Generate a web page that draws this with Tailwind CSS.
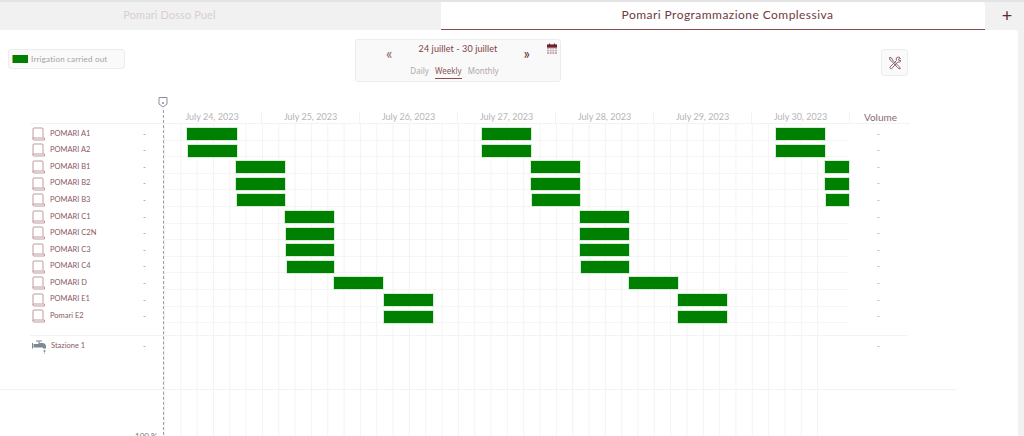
<!DOCTYPE html>
<html lang="en">
<head>
<meta charset="utf-8">
<title>Pomari Programmazione Complessiva</title>
<script src="https://cdn.jsdelivr.net/npm/@tailwindcss/browser@4"></script>
</head>
<body class="h-[436px] overflow-hidden bg-[#f1f1f1] font-['Lato',sans-serif] text-[#7b3f45]">

<!-- Tabs -->
<div class="flex h-[30px] border-t-2 border-[#e4e4e4]">
  <div class="w-[441px] flex items-center justify-center pr-[102px] text-[11px] tracking-[0.1px] text-[#d9cfcf] pb-[1px]">Pomari Dosso Puel</div>
  <div class="w-[544px] flex items-center justify-center pl-[29px] bg-white border-b border-[#8a4a50] rounded-tr-[3px] text-[12px] tracking-[0.45px] text-[#6e3a40] pb-[1px]">Pomari Programmazione Complessiva</div>
  <div class="flex-1 flex items-center justify-center pl-[5px] text-[#5a2a30] text-[18px] leading-none pb-[3px]">+</div>
</div>

<!-- Card -->
<div class="w-[1018px] h-[406px] bg-white rounded-tr-[3px] overflow-hidden relative">

  <!-- Toolbar -->
  <div class="h-[64px] relative">
    <div class="absolute left-[8px] top-[19px] w-[117px] h-[20px] flex items-center gap-[3px] pl-[3px] bg-[#fafafa] border border-[#ececec] rounded-[3px] text-[8px] tracking-[0.2px] text-[#a9a0a0]">
      <span class="w-[16px] h-[8px] bg-[#008000] border-l border-[#c9a13c]"></span>
      <span>Irrigation carried out</span>
    </div>

    <div class="absolute left-[355px] top-[9px] w-[206px] h-[43px] bg-[#f9f9f9] border border-[#ececec] rounded-[3px]">
      <div class="flex justify-between items-center pl-[30px] pr-[30px]">
        <span class="text-[15px] leading-none mt-[6px] text-[#8a5a5e]">«</span>
        <span class="text-[9px] leading-none mb-[5px] text-[#7b3f45] tracking-[0.1px]">24 juillet - 30 juillet</span>
        <span class="text-[15px] leading-none mt-[6px] text-[#5a2a30]">»</span>
      </div>
      <div class="flex justify-center gap-[6px] mt-[4px] pr-[7px] font-['Noto_Sans',sans-serif] text-[8px] text-[#b0aaaa]">
        <span class="h-[14px]">Daily</span>
        <span class="h-[14px] text-[#8a5a5e] border-b border-[#8a4a50]">Weekly</span>
        <span class="h-[14px]">Monthly</span>
      </div>
      <svg class="absolute left-[190px] top-[3px]" width="12" height="12" viewBox="0 0 12 12">
        <rect x="1" y="1.500" width="10" height="9.500" fill="#c4a9ad"/>
        <rect x="1" y="1.500" width="10" height="3" fill="#6e1f2b"/>
        <rect x="3" y="0.500" width="1" height="2.500" fill="#6e1f2b"/>
        <rect x="8" y="0.500" width="1" height="2.500" fill="#6e1f2b"/>
        <path d="M1 6.500H11M1 8.700H11M3.500 5V11M6 5V11M8.500 5V11" stroke="#fff" stroke-width="0.6"/>
      </svg>
    </div>

    <div class="absolute left-[881px] top-[19px] w-[27px] h-[27px] flex items-center justify-center bg-[#fafafa] border border-[#ececec] rounded-[3px]">
      <svg width="14" height="14" viewBox="0 0 14 14" fill="none" stroke="#8f6468" stroke-width="1">
        <path d="M1.500 1.500L3.500 1.800L4.500 4L11 10.500L12.500 12.500L11 12.800L9.500 11.500L3.500 5L1.800 3.800Z"/>
        <path d="M12.500 2.500A2.600 2.600 0 0 0 8.800 1.500A2.800 2.800 0 0 0 8.500 4.500L2 11A1.300 1.300 0 0 0 3.500 12.800L9.800 6A2.800 2.800 0 0 0 13 4.800L11 4.500L10.500 3Z"/>
      </svg>
    </div>
  </div>

  <!-- Chart -->
  <div class="relative">
    <!-- vertical grid -->
    <div class="absolute left-[164px] top-[29px] w-[669px] h-[320px] bg-[linear-gradient(to_right,#f3f3f3_1px,transparent_1px)] bg-[length:16.33px_100%]"></div>
    <!-- today marker -->
    <div class="absolute left-[163px] top-[16px] h-[330px] border-l border-dashed border-[#9aa0a8]"></div>
    <svg class="absolute left-[158px] top-[2px]" width="10" height="12" viewBox="0 0 10 12" fill="#fff" stroke="#8a8f9c">
      <path d="M1 1.500H9V8L5 11L1 8Z"/>
      <circle cx="5" cy="7" r="0.6" fill="#8a8f9c"/>
    </svg>

    <!-- header dates -->
    <div class="relative flex h-[29px] pl-[163px] text-[9px] leading-[10px] text-[#b5b5b5]">
      <div class="w-[98px] mt-[18px] h-[11px] text-center">July 24, 2023</div>
      <div class="w-[98px] mt-[18px] h-[11px] text-center border-l border-[#f3f3f3]">July 25, 2023</div>
      <div class="w-[98px] mt-[18px] h-[11px] text-center border-l border-[#f3f3f3]">July 26, 2023</div>
      <div class="w-[98px] mt-[18px] h-[11px] text-center border-l border-[#f3f3f3]">July 27, 2023</div>
      <div class="w-[98px] mt-[18px] h-[11px] text-center border-l border-[#f3f3f3]">July 28, 2023</div>
      <div class="w-[98px] mt-[18px] h-[11px] text-center border-l border-[#f3f3f3]">July 29, 2023</div>
      <div class="w-[98px] mt-[18px] h-[11px] text-center border-l border-[#f3f3f3]">July 30, 2023</div>
      <div class="w-[62px] mt-[18px] h-[11px] text-center border-l border-[#f3f3f3] text-[10px] text-[#8a6a70]">Volume</div>
    </div>

    <!-- rows -->
    <div id="rows" class="relative ml-[30px] w-[880px] border-t border-[#f3f3f3]"></div>

    <!-- station -->
    <div class="relative ml-[30px] w-[878px] h-[54px] mt-[12px] border-t border-[#f3f3f3] flex text-[7.5px]">
      <div class="w-[113px] flex pl-[2px] pt-[3px] gap-[4px]">
        <svg width="15" height="15" viewBox="0 0 15 15" fill="#7d8796">
          <path d="M4 1.500H10V2.500H7.500V4H10A3.500 3.500 0 0 1 14 7.500V9.500H11V8.500H1.500V5H6.500V2.500H4Z"/>
          <rect x="0" y="4" width="1" height="5.500"/>
          <path d="M12.500 10.500L13.500 12A1 1 0 0 1 11.500 12Z"/>
          <circle cx="12.500" cy="14" r="0.6"/>
        </svg>
        <span class="text-[#8a5a5e] leading-[14px]">Stazione 1</span>
      </div>
      <div class="w-[21px] pt-[5px] text-[#8a8a8a] leading-[12px]">-</div>
      <div class="ml-[713px] pt-[5px] text-[#8a9aa8] leading-[12px]">-</div>
    </div>
    <div class="relative w-[957px] border-t border-[#f3f3f3] h-[45px]">
      <div class="absolute left-[135px] top-[40px] text-[8px] text-[#777]">100 %</div>
    </div>
  </div>
</div>

<script>
  // x0/x1 = bar edges in page pixels
  const rows = [
    ["POMARI A1", [[187,237],[482,531],[776,825]]],
    ["POMARI A2", [[188,237],[482,531],[776,825]]],
    ["POMARI B1", [[236,285],[531,580],[825,849]]],
    ["POMARI B2", [[236,285],[531,580],[825,849]]],
    ["POMARI B3", [[237,285],[532,580],[826,849]]],
    ["POMARI C1", [[285,334],[580,629]]],
    ["POMARI C2N", [[286,334],[580,629]]],
    ["POMARI C3", [[286,334],[580,629]]],
    ["POMARI C4", [[287,334],[581,629]]],
    ["POMARI D", [[334,383],[629,678]]],
    ["POMARI E1", [[384,433],[678,727]]],
    ["Pomari E2", [[384,433],[678,727]]],
  ];

  const rowsEl = document.getElementById("rows");
  rows.forEach(([name, bars]) => {
    const row = document.createElement("div");
    row.className = "relative flex h-[16.6px] text-[7.5px]";
    // the 1px pale border sits outside the green, hence the widened box
    const barsHtml = bars.map(([a, b]) =>
      `<div class="absolute top-[3px] h-[14px] bg-[#008000] border border-[#d5ecd5]" style="left:${a - 165}px;width:${b - a + 2}px"></div>`
    ).join("");
    row.innerHTML = `
      <div class="w-[113px] flex items-center pl-[2px] pt-[2px] gap-[4px]">
        <svg width="14" height="14" viewBox="0 0 14 14" fill="none" stroke="#b98f92" stroke-width="0.9" class="shrink-0 mt-[1px]">
          <path d="M1 12V2A1 1 0 0 1 2 1H10A1 1 0 0 1 11 2V10.500"/>
          <path d="M1 12.500A1 1 0 0 1 2 11H12.500V13H2A1 1 0 0 1 1 12.500Z"/>
        </svg>
        <span class="leading-none text-[#8a5a5e]">${name}</span>
      </div>
      <div class="w-[21px] flex items-center text-[#8a8a8a] pt-[4px]">-</div>
      <div class="relative w-[685px] h-full border-b border-[#f5f5f5]">${barsHtml}</div>
      <div class="ml-[28px] flex items-center text-[#8a9aa8] pt-[4px]">-</div>`;
    rowsEl.appendChild(row);
  });
</script>
</body>
</html>
